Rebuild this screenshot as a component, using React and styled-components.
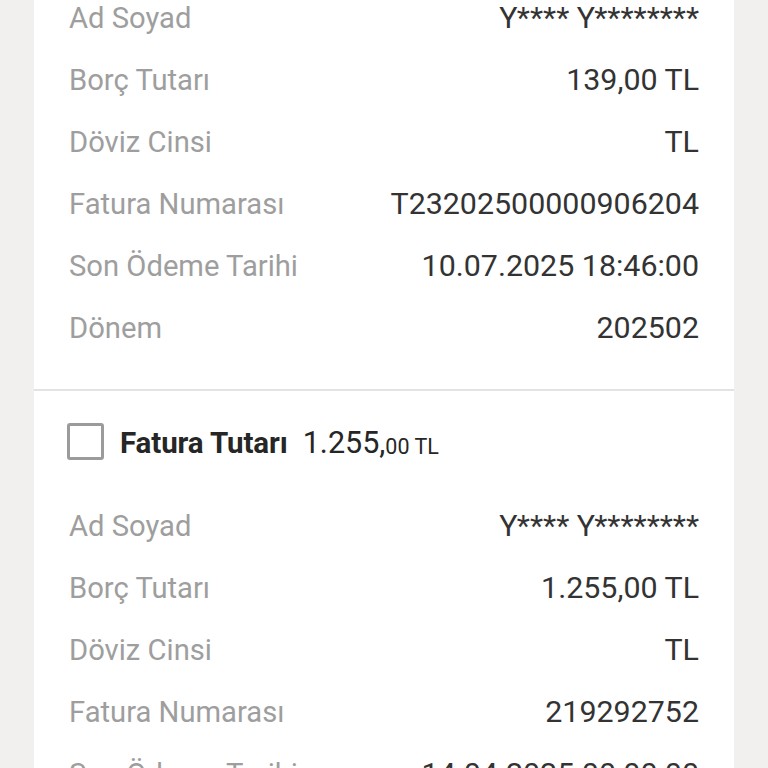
import React from "react";
import styled, { createGlobalStyle } from "styled-components";

const Global = createGlobalStyle`
  html, body { margin: 0; padding: 0; background: #f1f0ee; }
  body { font-family: Roboto, "Noto Sans", Arial, sans-serif; overflow: hidden; }
`;

const Page = styled.div`
  width: 768px;
  height: 768px;
  overflow: hidden;
  display: flex;
  justify-content: center;
`;

const Card = styled.div`
  width: 700px;
  margin-top: -14px;
  background: #ffffff;
  align-self: flex-start;
`;

const Section = styled.div`
  padding: ${(p) => p.$pad};
  border-bottom: ${(p) => (p.$divider ? "2px solid #e3e3e3" : "none")};
`;

const Header = styled.div`
  display: flex;
  align-items: center;
  height: 37px;
  margin-bottom: 34px;
`;

const Box = styled.div`
  width: 31px;
  height: 31px;
  border: 3px solid #9b9b9b;
  border-radius: 3px;
  margin-left: -2px;
  margin-right: 16px;
  flex-shrink: 0;
`;

const HeaderLabel = styled.span`
  font-size: 29.5px;
  font-weight: 700;
  color: #262626;
  margin-right: 15px;
  letter-spacing: -0.1px;
  padding-top: 2px;
`;

const Amount = styled.span`
  font-size: 30.5px;
  color: #262626;
  padding-top: 2px;
`;

const AmountSmall = styled.span`
  font-size: 21.5px;
  color: #262626;
  padding-top: 9px;
`;

const Row = styled.div`
  display: flex;
  justify-content: space-between;
  align-items: center;
  height: 62px;
`;

const Label = styled.span`
  font-size: 29.2px;
  color: #9e9e9e;
  padding-top: 1px;
`;

const Value = styled.span`
  font-size: 30.4px;
  color: #333333;
`;

const first = [
  ["Ad Soyad", "Y**** Y********"],
  ["Borç Tutarı", "139,00 TL"],
  ["Döviz Cinsi", "TL"],
  ["Fatura Numarası", "T23202500000906204"],
  ["Son Ödeme Tarihi", "10.07.2025 18:46:00"],
  ["Dönem", "202502"],
];

const second = [
  ["Ad Soyad", "Y**** Y********"],
  ["Borç Tutarı", "1.255,00 TL"],
  ["Döviz Cinsi", "TL"],
  ["Fatura Numarası", "219292752"],
  ["Son Ödeme Tarihi", "14.04.2025 00:00:00"],
  ["Dönem", "202503"],
];

const Rows = ({ items }) =>
  items.map(([l, v]) => (
    <Row key={l}>
      <Label>{l}</Label>
      <Value>{v}</Value>
    </Row>
  ));

export default function App() {
  return (
    <>
      <Global />
      <Page>
        <Card>
          <Section $pad="0 35px 31px 35px" $divider>
            <Rows items={first} />
          </Section>
          <Section $pad="32px 35px 0 35px">
            <Header>
              <Box />
              <HeaderLabel>Fatura Tutarı</HeaderLabel>
              <Amount>1.255,</Amount>
              <AmountSmall>00 TL</AmountSmall>
            </Header>
            <Rows items={second} />
          </Section>
        </Card>
      </Page>
    </>
  );
}
